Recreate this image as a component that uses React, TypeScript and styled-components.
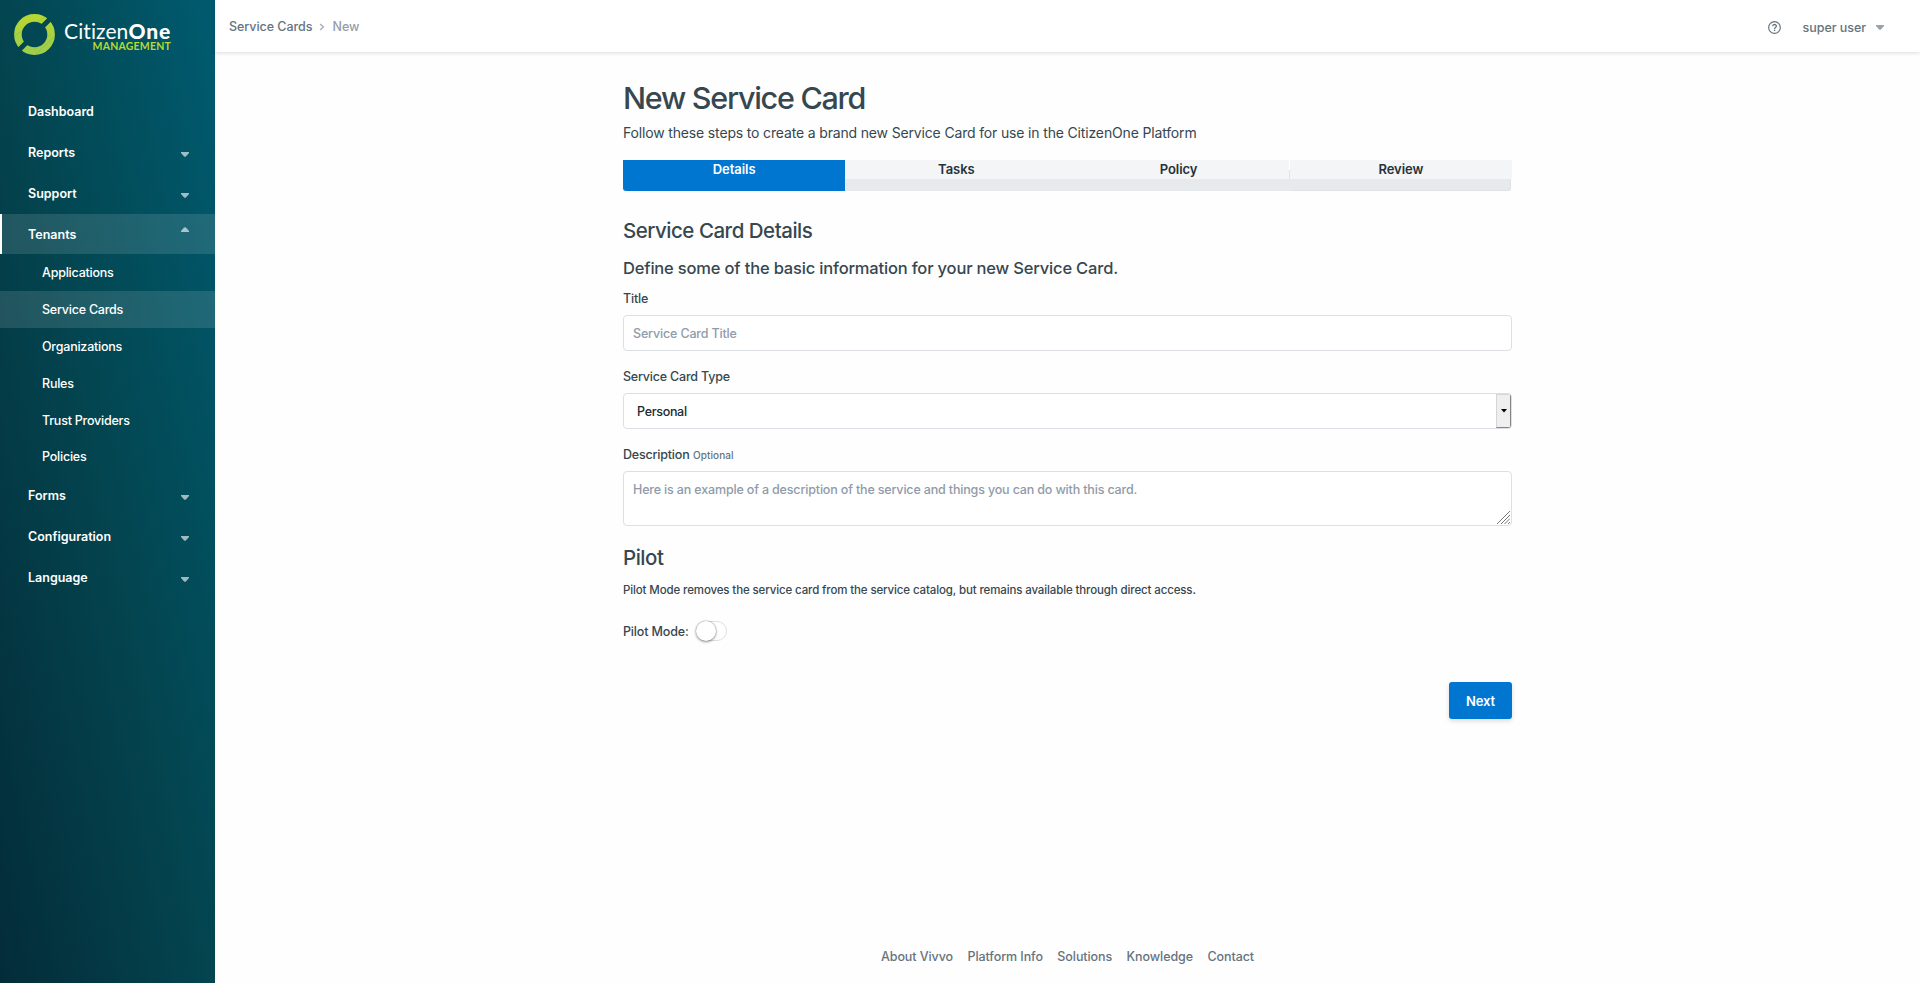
import React from "react";
import styled, { createGlobalStyle, css } from "styled-components";

const GlobalStyle = createGlobalStyle`
  *, *::before, *::after { box-sizing: border-box; }
  body {
    margin: 0;
    background: #fefefe;
    color: #36474f;
    font-family: Inter, "Liberation Sans", sans-serif;
    font-size: 12.5px;
    font-weight: 500;
  }
  h1, h2, h3, p { margin: 0; }
  a { color: inherit; text-decoration: none; }
`;

/* ---------- Shell ---------- */

const Shell = styled.div`
  display: flex;
  height: 983px;
  overflow: hidden;
`;

const Sidebar = styled.aside`
  flex: 0 0 215px;
  display: flex;
  flex-direction: column;
  background: linear-gradient(to top right, #032c3a, #033b46 30%, #034550 50%, #005b6f);
  color: #fff;
`;

const Main = styled.div`
  flex: 1;
  min-width: 0;
  display: flex;
  flex-direction: column;
  align-items: center;
`;

/* ---------- Logo ---------- */

const Logo = styled.a`
  display: flex;
  align-items: flex-start;
  gap: 9px;
  height: 91px;
  padding: 14px 0 0 14px;
`;

const Wordmark = styled.div`
  display: flex;
  flex-direction: column;
  width: 107px;
  padding-top: 7px;
  font-family: Lato, sans-serif;
`;

const BrandName = styled.span`
  font-size: 21px;
  line-height: 20px;
  height: 20px;
  letter-spacing: 0.1px;
  font-weight: 400;
  white-space: nowrap;
  b { font-weight: 900; letter-spacing: 0.85px; }
`;

const BrandArea = styled.span`
  align-self: flex-end;
  font-size: 10.5px;
  line-height: 10px;
  font-weight: 700;
  letter-spacing: 0.2px;
  color: #b9d82f;
`;

/* ---------- Navigation ---------- */

const Nav = styled.nav`
  display: flex;
  flex-direction: column;
`;

const NavItem = styled.a<{ $open?: boolean }>`
  display: flex;
  align-items: center;
  justify-content: space-between;
  height: 40px;
  margin-bottom: ${(p) => (p.$open ? 0 : 1)}px;
  padding: 0 26px 0 28px;
  font-weight: 600;
  ${(p) =>
    p.$open &&
    css`
      padding-left: 26px;
      border-left: 2px solid #fff;
      background: rgba(255, 255, 255, 0.12);
    `}
`;

const CaretSlot = styled.span<{ $open?: boolean }>`
  display: flex;
  padding-top: ${(p) => (p.$open ? 0 : 4)}px;
  padding-bottom: ${(p) => (p.$open ? 9 : 0)}px;
`;

const SubNav = styled.div`
  display: flex;
  flex-direction: column;
  padding-bottom: 0.7px;
`;

const SubItem = styled.a<{ $active?: boolean }>`
  display: flex;
  align-items: center;
  height: 36.8px;
  padding: 1px 0 0 42px;
  letter-spacing: -0.22px;
  background: ${(p) => (p.$active ? "rgba(255, 255, 255, 0.12)" : "transparent")};
`;

/* ---------- Header ---------- */

const Header = styled.header`
  align-self: stretch;
  flex: none;
  height: 52px;
  display: flex;
  justify-content: space-between;
  padding: 0 36px 0 14px;
  background: #fff;
  box-shadow: 0 1px 4px rgba(0, 0, 0, 0.14);
  color: #66737d;
`;

const Breadcrumb = styled.div`
  display: flex;
  align-items: center;
  gap: 7px;
  height: 53px;
  letter-spacing: -0.04px;
`;

const Current = styled.span`
  color: #939da9;
`;

const UserMenu = styled.div`
  display: flex;
  align-items: center;
  height: 55px;
`;

const UserName = styled.span`
  margin: 0 10px 0 22px;
  letter-spacing: -0.05px;
`;

/* ---------- Content ---------- */

const Content = styled.main`
  flex: 1;
  display: flex;
  flex-direction: column;
  width: 889px;
  padding-top: 26px;
`;

const PageTitle = styled.h1`
  font-size: 30.5px;
  line-height: 40px;
  font-weight: 500;
  letter-spacing: -1.27px;
`;

const Lead = styled.p`
  margin-top: 5px;
  font-size: 14px;
  line-height: 20px;
  font-weight: 400;
  letter-spacing: -0.159px;
`;

const Steps = styled.div`
  display: flex;
  margin-top: 17px;
  height: 31px;
`;

const Step = styled.div<{ $active?: boolean; $last?: boolean }>`
  flex: 1;
  display: flex;
  flex-direction: column;
  text-align: center;
  font-size: 13px;
  font-weight: 600;
  letter-spacing: -0.05px;
  color: ${(p) => (p.$active ? "#fff" : "#263238")};

  span {
    height: 19px;
    line-height: 19px;
    background: ${(p) => (p.$active ? "#0076d1" : "#f3f5f7")};
    ${(p) =>
      p.$last &&
      css`
        margin-left: -1px;
        border-left: 1px solid;
        border-image: linear-gradient(#fff 50%, #e0e4e7 50%) 1;
      `}
  }

  &::after {
    content: "";
    flex: 1;
    background: ${(p) => (p.$active ? "#0076d1" : "#e6eaec")};
    ${(p) => p.$active && "border-bottom-left-radius: 3px;"}
    ${(p) =>
      p.$last &&
      css`
        margin-right: 1px;
        border-right: 1px solid #dfe3e6;
        border-bottom: 1px solid #dfe3e6;
        border-bottom-right-radius: 3px;
      `}
  }
`;

const SectionTitle = styled.h2<{ $top: number }>`
  margin-top: ${(p) => p.$top}px;
  font-size: 20.5px;
  line-height: 26px;
  font-weight: 500;
  letter-spacing: -0.49px;
`;

const SectionLead = styled.h3`
  margin: 13px 0 11px;
  font-size: 16.5px;
  line-height: 22px;
  font-weight: 500;
  letter-spacing: -0.175px;
`;

const Field = styled.div`
  display: flex;
  flex-direction: column;
  gap: 7px;
  margin-bottom: 17px;
`;

const Label = styled.label`
  line-height: 18px;
  letter-spacing: -0.2px;
`;

const Optional = styled.small`
  margin-left: 0.5px;
  font-size: 10px;
  letter-spacing: 0.05px;
  color: #66737d;
`;

const controlStyle = css`
  width: 100%;
  border: 1px solid #dcdfe4;
  border-radius: 4px;
  background: #fff;
  font: 500 12.5px Inter, sans-serif;
  letter-spacing: -0.16px;
  outline: none;
  &::placeholder { color: #8f9ba8; opacity: 1; }
`;

const TextInput = styled.input`
  ${controlStyle}
  height: 36px;
  padding: 0 9px;
`;

const SelectBox = styled.div`
  ${controlStyle}
  display: flex;
  align-items: stretch;
  height: 36px;
  overflow: hidden;
`;

const Select = styled.select`
  flex: 1;
  appearance: none;
  border: 0;
  padding: 1px 13px 0;
  background: transparent;
  color: #202a30;
  font: inherit;
  letter-spacing: -0.3px;
  outline: none;
`;

const SelectButton = styled.span`
  display: flex;
  align-items: center;
  justify-content: center;
  width: 15px;
  background: #efefef;
  border: 1px solid #d5d5d5;
  border-right-color: #858585;
  border-bottom-color: #858585;
`;

const AreaBox = styled.div`
  display: flex;
  position: relative;
`;

const TextArea = styled.textarea`
  ${controlStyle}
  display: block;
  height: 55px;
  padding: 9px 9px;
  line-height: 18px;
  letter-spacing: -0.162px;
  resize: none;
`;

const Grip = styled.svg`
  position: absolute;
  right: 2px;
  bottom: 2px;
`;

const Note = styled.p`
  margin-top: 10px;
  font-size: 11.5px;
  line-height: 18px;
  letter-spacing: -0.128px;
`;

const ToggleRow = styled.div`
  display: flex;
  align-items: center;
  gap: 7.5px;
  height: 20px;
  margin-top: 22px;
  letter-spacing: -0.15px;
`;

const Switch = styled.button`
  width: 31px;
  height: 20px;
  padding: 0;
  border: 1px solid #dfdfdf;
  border-radius: 10px;
  background: #fff;
  &::before {
    content: "";
    display: block;
    width: 20px;
    height: 20px;
    margin: -1px;
    border-radius: 50%;
    background: #fff;
    box-shadow: 0 0 1px 0.5px rgba(0, 0, 0, 0.18), 0 1px 3px rgba(0, 0, 0, 0.4);
  }
`;

const NextButton = styled.button`
  align-self: flex-end;
  width: 63px;
  height: 37px;
  margin-top: 41px;
  padding: 0;
  border: 0;
  border-radius: 3px;
  background: #0076d1;
  color: #fff;
  font: 600 13px Inter, sans-serif;
  letter-spacing: -0.1px;
  box-shadow: 0 2px 5px rgba(0, 0, 0, 0.14);
`;

const Footer = styled.footer`
  display: flex;
  gap: 14.5px;
  height: 53px;
  align-items: center;
  letter-spacing: -0.085px;
  color: #66737d;
`;

/* ---------- Drawings ---------- */

const Ring = () => (
  <svg width="41" height="41" viewBox="0 0 41 41">
    <defs>
      <linearGradient id="ring" x1="0" y1="0" x2="0" y2="1">
        <stop offset="0" stopColor="#b5d733" />
        <stop offset="1" stopColor="#9dce4d" />
      </linearGradient>
      <mask id="gap">
        <rect width="41" height="41" fill="#fff" />
        <path d="M41 0L0 41" stroke="#000" strokeWidth="5" />
      </mask>
    </defs>
    <g mask="url(#gap)">
      <circle cx="20.5" cy="20.5" r="16.6" fill="none" stroke="url(#ring)" strokeWidth="7.6" />
      <path
        d="M0 22L11 15.500M22 9L31 3M22 40L41 22M20 36L37 20"
        stroke="#6fa548"
        strokeWidth="0.5"
        opacity="0.6"
        fill="none"
        mask="url(#band)"
      />
    </g>
    <mask id="band">
      <circle cx="20.5" cy="20.5" r="16.6" fill="none" stroke="#fff" strokeWidth="7.6" />
    </mask>
  </svg>
);

const Caret = ({ up, color = "rgba(255,255,255,0.62)" }: { up?: boolean; color?: string }) => (
  <svg width="8" height="5" viewBox="0 0 8 5">
    <path
      d={up ? "M0 5V4L3.100 .6Q4 -.2 4.900 .6L8 4V5Z" : "M0 0V1L3.100 4.400Q4 5.200 4.900 4.400L8 1V0Z"}
      fill={color}
    />
  </svg>
);

const Chevron = () => (
  <svg width="6" height="8" viewBox="0 0 6 8">
    <path d="M1.200 1L4.300 4L1.200 7" fill="none" stroke="#a9b1b9" strokeWidth="1.500" />
  </svg>
);

const HelpIcon = () => (
  <svg width="13" height="13" viewBox="0 0 13 13" fill="none" stroke="#66737d">
    <circle cx="6.500" cy="6.500" r="5.850" strokeWidth="1.200" />
    <path d="M4.700 5.300C4.700 2.900 8.400 3 8.400 5.100C8.400 6.500 6.550 6.500 6.550 7.900" strokeWidth="1.300" />
    <path d="M6.550 8.700V10" strokeWidth="1.400" />
  </svg>
);

/* ---------- Data ---------- */

const navigation: { label: string; leaf?: boolean; children?: string[] }[] = [
  { label: "Dashboard", leaf: true },
  { label: "Reports" },
  { label: "Support" },
  {
    label: "Tenants",
    children: ["Applications", "Service Cards", "Organizations", "Rules", "Trust Providers", "Policies"],
  },
  { label: "Forms" },
  { label: "Configuration" },
  { label: "Language" },
];

const steps = ["Details", "Tasks", "Policy", "Review"];
const footerLinks = ["About Vivvo", "Platform Info", "Solutions", "Knowledge", "Contact"];

export default function App() {
  return (
    <Shell>
      <GlobalStyle />
      <Sidebar>
        <Logo>
          <Ring />
          <Wordmark>
            <BrandName>Citizen<b>One</b></BrandName>
            <BrandArea>MANAGEMENT</BrandArea>
          </Wordmark>
        </Logo>
        <Nav>
          {navigation.map(({ label, leaf, children }) => (
            <React.Fragment key={label}>
              <NavItem $open={!!children}>
                {label}
                {!leaf && (
                  <CaretSlot $open={!!children}>
                    <Caret up={!!children} />
                  </CaretSlot>
                )}
              </NavItem>
              {children && (
                <SubNav>
                  {children.map((child) => (
                    <SubItem key={child} $active={child === "Service Cards"}>
                      {child}
                    </SubItem>
                  ))}
                </SubNav>
              )}
            </React.Fragment>
          ))}
        </Nav>
      </Sidebar>

      <Main>
        <Header>
          <Breadcrumb>
            <a>Service Cards</a>
            <Chevron />
            <Current>New</Current>
          </Breadcrumb>
          <UserMenu>
            <HelpIcon />
            <UserName>super user</UserName>
            <Caret color="#9aa3aa" />
          </UserMenu>
        </Header>

        <Content>
          <PageTitle>New Service Card</PageTitle>
          <Lead>Follow these steps to create a brand new Service Card for use in the CitizenOne Platform</Lead>
          <Steps>
            {steps.map((step, i) => (
              <Step key={step} $active={i === 0} $last={i === steps.length - 1}>
                <span>{step}</span>
              </Step>
            ))}
          </Steps>

          <SectionTitle $top={27}>Service Card Details</SectionTitle>
          <SectionLead>Define some of the basic information for your new Service Card.</SectionLead>
          <Field>
            <Label>Title</Label>
            <TextInput placeholder="Service Card Title" />
          </Field>
          <Field>
            <Label>Service Card Type</Label>
            <SelectBox>
              <Select defaultValue="Personal">
                <option>Personal</option>
              </Select>
              <SelectButton>
                <svg width="6" height="4" viewBox="0 0 6 4">
                  <path d="M0 0H6L3 3.500Z" fill="#000" />
                </svg>
              </SelectButton>
            </SelectBox>
          </Field>
          <Field>
            <Label>
              Description <Optional>Optional</Optional>
            </Label>
            <AreaBox>
              <TextArea placeholder="Here is an example of a description of the service and things you can do with this card." />
              <Grip width="13" height="13" viewBox="0 0 13 13">
                <path d="M0 13L13 0M4 13L13 4M7.500 13L13 7.500M11 13L13 11" stroke="#777" strokeWidth="1" />
              </Grip>
            </AreaBox>
          </Field>

          <SectionTitle $top={2}>Pilot</SectionTitle>
          <Note>
            Pilot Mode removes the service card from the service catalog, but remains available through direct access.
          </Note>
          <ToggleRow>
            Pilot Mode:
            <Switch aria-label="Pilot Mode" />
          </ToggleRow>
          <NextButton>Next</NextButton>
        </Content>

        <Footer>
          {footerLinks.map((link) => (
            <a key={link}>{link}</a>
          ))}
        </Footer>
      </Main>
    </Shell>
  );
}
